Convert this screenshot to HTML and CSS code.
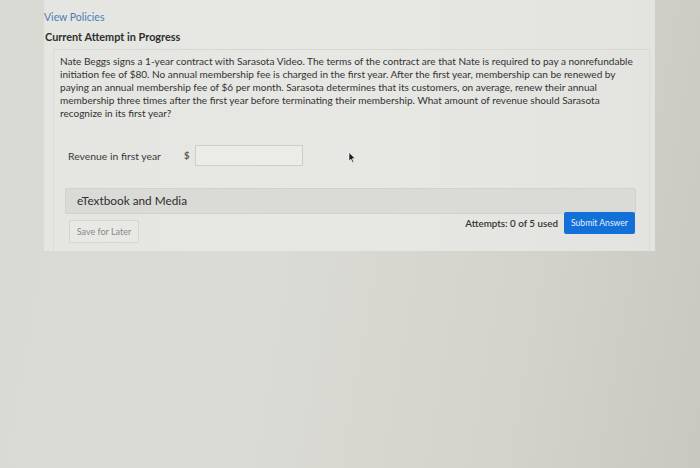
FILE: index.html
```html
<!DOCTYPE html>
<html lang="en">
<head>
<meta charset="utf-8">
<title>Question</title>
<link rel="stylesheet" href="styles.css">
</head>
<body>
<div class="screen">
  <div class="card">
    <a class="policies" href="#">View Policies</a>
    <div class="attempt">Current Attempt in Progress</div>
    <div class="question">
      <p class="text">Nate Beggs signs a 1-year contract with Sarasota Video. The terms of the contract are that Nate is required to pay a nonrefundable<br>initiation fee of $80. No annual membership fee is charged in the first year. After the first year, membership can be renewed by<br>paying an annual membership fee of $6 per month. Sarasota determines that its customers, on average, renew their annual<br>membership three times after the first year before terminating their membership. What amount of revenue should Sarasota<br>recognize in its first year?</p>
      <div class="answer-row">
        <span class="label">Revenue in first year</span>
        <span class="dollar">$</span>
        <span class="input"></span>
        <svg class="cursor" width="8" height="11" viewBox="0 0 8 11"><path d="M1 0.5 L1 9 L3 7.2 L4.6 10.5 L5.8 9.9 L4.3 6.7 L7 6.5 Z" fill="#1a1a1a" stroke="#fff" stroke-width="0.6"/></svg>
      </div>
      <div class="media">eTextbook and Media</div>
      <div class="footer">
        <span class="save">Save for Later</span>
        <div class="submit-group">
          <span class="attempts">Attempts: 0 of 5 used</span>
          <span class="submit">Submit Answer</span>
        </div>
      </div>
    </div>
  </div>
</div>
</body>
</html>
```
FILE: styles.css
```css
html, body {
  margin: 0;
  padding: 0;
}
body {
  width: 700px;
  height: 468px;
  overflow: hidden;
  font-family: Lato, "Open Sans", sans-serif;
  background: linear-gradient(100deg, #dadad4 0%, #dbdbd5 40%, #d3d2cb 75%, #c9c8c0 100%);
}
.screen {
  height: 468px;
  box-sizing: border-box;
  padding-left: 44px;
}
.card {
  width: 611px;
  height: 251px;
  box-sizing: border-box;
  background: linear-gradient(90deg, #e5e5e1 0%, #e7e7e3 50%, #e3e3df 100%);
  padding-top: 10px;
}
.policies {
  display: block;
  color: #4b7db3;
  font-size: 10.5px;
  text-decoration: none;
  line-height: 14px;
}
.attempt {
  margin-top: 6px;
  margin-left: 1px;
  font-size: 10.9px;
  font-weight: bold;
  color: #2f2f2f;
  line-height: 14px;
}
.question {
  margin-top: 5px;
  margin-left: 9px;
  width: 597px;
  height: 202px;
  box-sizing: border-box;
  border-top: 1px solid #d8d8d3;
  border-left: 1px solid #dcdcd7;
  border-right: 1px solid #dcdcd7;
  padding: 5px 0 0 6px;
}
.text {
  margin: 0;
  font-size: 10.05px;
  line-height: 13px;
  color: #333;
  white-space: nowrap;
}
.answer-row {
  display: flex;
  align-items: center;
  margin-top: 25px;
  padding-left: 8px;
  height: 21px;
}
.label {
  font-size: 10.4px;
  color: #3a3a3a;
  width: 116px;
}
.dollar {
  font-size: 9.5px;
  color: #555;
  font-weight: bold;
  width: 11px;
}
.input {
  width: 106px;
  height: 19px;
  border: 1px solid #cfcfca;
  background: #ebebe7;
}
.cursor {
  margin-left: 45px;
  margin-top: 4px;
}
.media {
  margin-top: 22px;
  margin-left: 5px;
  width: 571px;
  height: 26px;
  box-sizing: border-box;
  background: #dadad6;
  border: 1px solid #d2d2cd;
  border-radius: 2px;
  padding-left: 11px;
  font-size: 11.8px;
  color: #2f2f2f;
  line-height: 24px;
}
.footer {
  display: flex;
  justify-content: space-between;
  margin-left: 9px;
  width: 566px;
}
.save {
  margin-top: 6px;
  height: 23px;
  width: 70px;
  box-sizing: border-box;
  border: 1px solid #d6d6d1;
  border-radius: 2px;
  background: #e8e8e4;
  color: #8a8a88;
  font-size: 9px;
  line-height: 21px;
  text-align: center;
}
.submit-group {
  display: flex;
  align-items: flex-start;
  gap: 6px;
  margin-top: -2px;
}
.attempts {
  font-size: 9.8px;
  color: #333;
  font-weight: 600;
  line-height: 14px;
  margin-top: 4px;
}
.submit {
  width: 71px;
  height: 22px;
  background: #1270d8;
  border-radius: 2px;
  color: #e6efff;
  font-size: 8.6px;
  line-height: 22px;
  text-align: center;
}
```
